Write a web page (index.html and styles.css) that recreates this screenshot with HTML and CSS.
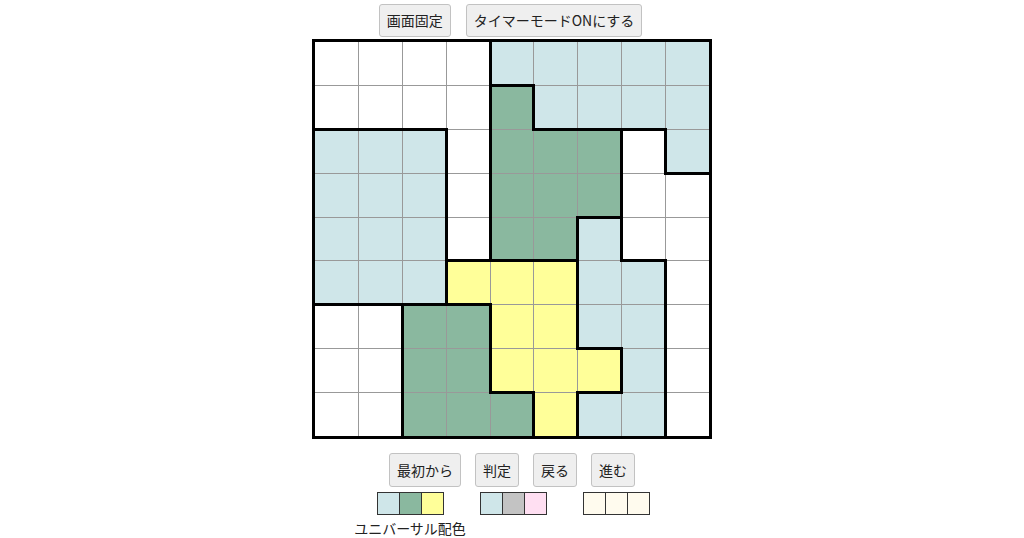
FILE: index.html
```html
<!DOCTYPE html>
<html lang="ja">
<head>
<meta charset="utf-8">
<link rel="stylesheet" href="styles.css">
</head>
<body>
<div class="page">
  <div class="btnrow top">
    <button class="btn">画面固定</button>
    <button class="btn">タイマーモードONにする</button>
  </div>
  <div class="board">
    <div class="c w"></div><div class="c w"></div><div class="c w"></div><div class="c w"></div><div class="c b l"></div><div class="c b"></div><div class="c b"></div><div class="c b"></div><div class="c b"></div>
    <div class="c w"></div><div class="c w"></div><div class="c w"></div><div class="c w"></div><div class="c g t l"></div><div class="c b l"></div><div class="c b"></div><div class="c b"></div><div class="c b"></div>
    <div class="c b t"></div><div class="c b t"></div><div class="c b t"></div><div class="c w l"></div><div class="c g l"></div><div class="c g t"></div><div class="c g t"></div><div class="c w t l"></div><div class="c b l"></div>
    <div class="c b"></div><div class="c b"></div><div class="c b"></div><div class="c w l"></div><div class="c g l"></div><div class="c g"></div><div class="c g"></div><div class="c w l"></div><div class="c w t"></div>
    <div class="c b"></div><div class="c b"></div><div class="c b"></div><div class="c w l"></div><div class="c g l"></div><div class="c g"></div><div class="c b t l"></div><div class="c w l"></div><div class="c w"></div>
    <div class="c b"></div><div class="c b"></div><div class="c b"></div><div class="c y t l"></div><div class="c y t"></div><div class="c y t"></div><div class="c b l"></div><div class="c b t"></div><div class="c w l"></div>
    <div class="c w t"></div><div class="c w t"></div><div class="c g t l"></div><div class="c g t"></div><div class="c y l"></div><div class="c y"></div><div class="c b l"></div><div class="c b"></div><div class="c w l"></div>
    <div class="c w"></div><div class="c w"></div><div class="c g l"></div><div class="c g"></div><div class="c y l"></div><div class="c y"></div><div class="c y t"></div><div class="c b l"></div><div class="c w l"></div>
    <div class="c w"></div><div class="c w"></div><div class="c g l"></div><div class="c g"></div><div class="c g t"></div><div class="c y l"></div><div class="c b t l"></div><div class="c b"></div><div class="c w l"></div>
  </div>
  <div class="btnrow bottom">
    <button class="btn">最初から</button>
    <button class="btn">判定</button>
    <button class="btn">戻る</button>
    <button class="btn">進む</button>
  </div>
  <div class="palettes">
    <div class="pal">
      <div class="swatches"><span class="sw c-b"></span><span class="sw c-g"></span><span class="sw c-y"></span></div>
      <div class="pal-label">ユニバーサル配色</div>
    </div>
    <div class="pal">
      <div class="swatches"><span class="sw c-b"></span><span class="sw c-gray"></span><span class="sw c-pink"></span></div>
    </div>
    <div class="pal">
      <div class="swatches"><span class="sw c-cream"></span><span class="sw c-cream"></span><span class="sw c-cream"></span></div>
    </div>
  </div>
</div>
</body>
</html>
```

FILE: styles.css
```css
html, body {
  margin: 0;
  padding: 0;
  background: #ffffff;
}
body {
  font-family: "Noto Sans CJK JP", "Noto Sans", sans-serif;
  color: #222;
  font-size: 14px;
}
.page {
  display: flex;
  flex-direction: column;
  align-items: center;
  padding-top: 4px;
}
.btnrow {
  display: flex;
  justify-content: center;
}
.btnrow.top {
  gap: 15px;
  margin-left: -3px;
}
.btnrow.bottom {
  gap: 14px;
  margin-top: 14px;
}
.btn {
  font-family: "Noto Sans CJK JP", "Noto Sans", sans-serif;
  font-size: 14px;
  line-height: 20px;
  color: #222;
  background: #efefef;
  border: 1px solid #c2c2c2;
  border-radius: 3px;
  padding: 6px 7px;
  margin: 0;
}
.btnrow.top .btn {
  line-height: 19px;
}
.board {
  box-sizing: border-box;
  width: 400px;
  height: 400px;
  margin-top: 2px;
  border: 3px solid #000;
  background: #999;
  display: grid;
  grid-template-columns: repeat(9, 1fr);
  grid-template-rows: repeat(9, 1fr);
  gap: 1px;
}
.c {
  position: relative;
}
.c.l::before {
  content: "";
  position: absolute;
  left: -2px;
  top: -2px;
  width: 3px;
  height: calc(100% + 4px);
  background: #000;
  z-index: 1;
}
.c.t::after {
  content: "";
  position: absolute;
  top: -2px;
  left: -2px;
  height: 3px;
  width: calc(100% + 4px);
  background: #000;
  z-index: 1;
}
.w { background: #ffffff; }
.b { background: #cfe6e9; }
.g { background: #8ab89f; }
.y { background: #ffff99; }

.palettes {
  display: flex;
  gap: 36px;
  margin-top: 5px;
  margin-left: 2px;
}
.pal {
  width: 67px;
  display: flex;
  flex-direction: column;
  align-items: center;
}
.swatches {
  display: flex;
  border: 1px solid #333;
}
.sw {
  width: 21px;
  height: 21px;
  border-left: 1px solid #333;
}
.sw:first-child { border-left: none; }
.c-b { background: #cfe6e9; }
.c-g { background: #8ab89f; }
.c-y { background: #ffff99; }
.c-gray { background: #c3c3c3; }
.c-pink { background: #ffdff2; }
.c-cream { background: #fffbee; }
.pal-label {
  white-space: nowrap;
  font-size: 14px;
  line-height: 20px;
  margin-top: 3px;
}
```
